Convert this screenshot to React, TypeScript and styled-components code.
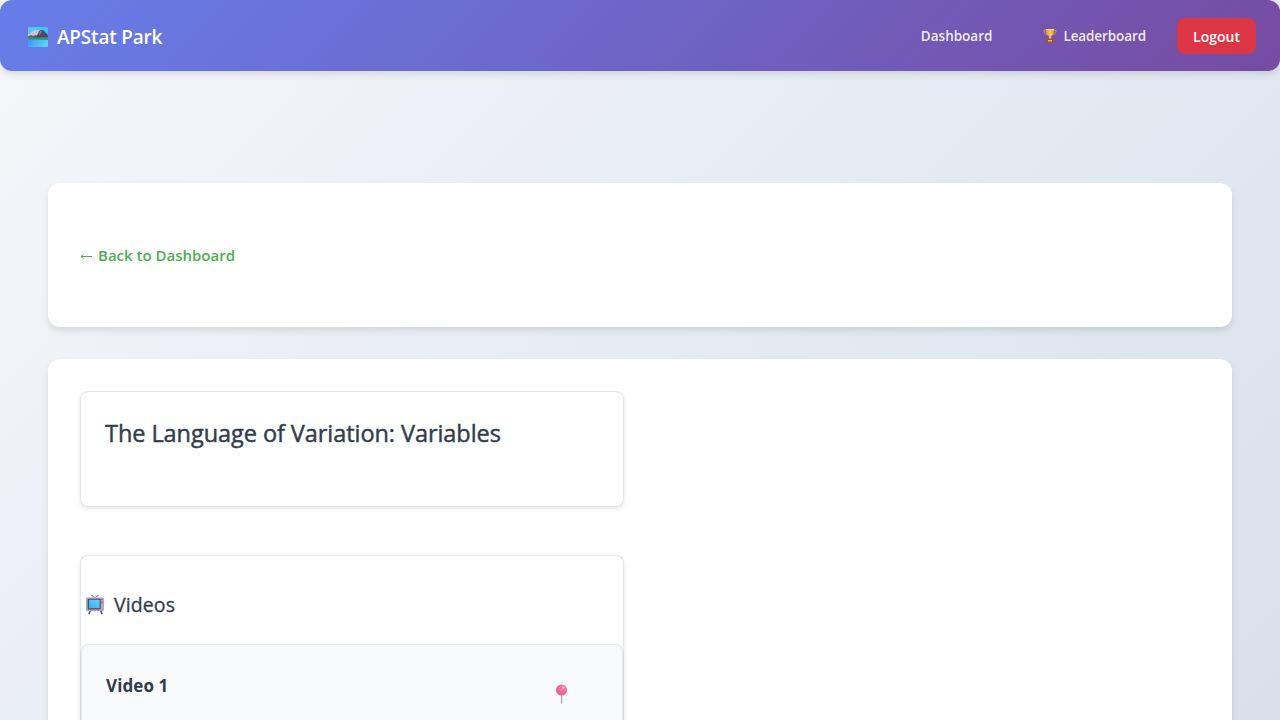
import React from "react";
import styled, { createGlobalStyle } from "styled-components";

const Global = createGlobalStyle`
  * { box-sizing: border-box; }
  body {
    margin: 0;
    font-family: "Open Sans", "Noto Sans", sans-serif;
    color: #323c4d;
  }
`;

const Shell = styled.div`
  display: flex;
  flex-direction: column;
  height: 100vh;
  overflow: hidden;
  background: linear-gradient(135deg, #f5f7fa 0%, #d8e0ec 100%);
`;

const Label = styled.span<{ $track?: number }>`
  letter-spacing: ${(p) => p.$track ?? 0}px;
  white-space: nowrap;
`;

const Navbar = styled.nav`
  display: flex;
  flex: none;
  align-items: center;
  justify-content: space-between;
  height: 71px;
  padding: 0 24px 0 27px;
  border-radius: 12px;
  background: linear-gradient(135deg, #667eea 0%, #764ba2 100%);
  box-shadow: 0 4px 6px rgba(0, 0, 0, 0.1);
`;

const Brand = styled.a`
  display: flex;
  align-items: center;
  gap: 9px;
  padding-top: 2px;
  color: #fff;
  font-size: 19px;
  font-weight: 600;
  line-height: 26px;
`;

const NavLinks = styled.div`
  display: flex;
  align-items: center;
`;

const NavLink = styled.a`
  display: flex;
  align-items: center;
  gap: 6px;
  margin-right: 31px;
  color: rgba(255, 255, 255, 0.9);
  font-size: 13.5px;
  font-weight: 600;
  line-height: 20px;
  &:first-child { margin-right: 51px; }
`;

const LogoutButton = styled.button`
  width: 79px;
  height: 36px;
  margin-top: 1px;
  padding: 2px 0 0;
  border: 0;
  border-radius: 8px;
  background: #dc3545;
  color: #fff;
  font: 600 14px/20px "Open Sans", "Noto Sans", sans-serif;
`;

const Page = styled.main`
  display: flex;
  flex: 1;
  flex-direction: column;
  gap: 32px;
  min-height: 0;
  padding: 112px 48px 0;
`;

const Panel = styled.section`
  flex: none;
  height: 144px;
  padding: 32px;
  border-radius: 12px;
  background: #fff;
  box-shadow: 0 4px 6px rgba(0, 0, 0, 0.1);
`;

const LessonPanel = styled(Panel)`
  display: flex;
  flex: 1;
  flex-direction: column;
  gap: 48px;
  height: auto;
  min-height: 0;
  padding-bottom: 0;
  border-radius: 12px 12px 0 0;
`;

const BackLink = styled.a`
  display: flex;
  align-items: center;
  gap: 6px;
  height: 79px;
  color: #4caf50;
  font-size: 15px;
  font-weight: 600;
`;

const Card = styled.article`
  flex: none;
  width: 544px;
  height: 116px;
  border: 1px solid #e5e7eb;
  border-radius: 8px;
  background: #fff;
  box-shadow: 0 2px 4px rgba(0, 0, 0, 0.1);
`;

const VideosCard = styled(Card)`
  display: flex;
  flex: 1;
  flex-direction: column;
  height: auto;
  min-height: 0;
  border-bottom: 0;
  border-radius: 8px 8px 0 0;
`;

const Title = styled.h1`
  margin: 0;
  padding: 23px 24px;
  font-size: 23.5px;
  font-weight: 400;
  line-height: 36px;
  -webkit-text-stroke: 0.45px currentColor;
`;

const SectionTitle = styled.h2`
  display: flex;
  flex: none;
  align-items: center;
  gap: 9px;
  height: 88px;
  margin: 0;
  padding: 9px 0 0 4px;
  font-size: 19.5px;
  font-weight: 400;
  -webkit-text-stroke: 0.3px currentColor;
`;

const VideoItem = styled.div`
  display: flex;
  flex: 1;
  justify-content: space-between;
  align-items: flex-start;
  min-height: 0;
  padding: 24px 54px 0 24px;
  border: 1px solid #e5e7eb;
  border-bottom: 0;
  border-radius: 8px 8px 0 0;
  background: #f9fafb;
  box-shadow: 0 1px 3px rgba(0, 0, 0, 0.1);
`;

const VideoName = styled.h3`
  margin: 3px 0 0;
  font-size: 17px;
  font-weight: 700;
  line-height: 28px;
`;

const PinSlot = styled.span`
  display: flex;
  padding-top: 15px;
`;

const Mountain = () => (
  <svg width="21" height="20" viewBox="0 0 21 20">
    <defs>
      <linearGradient id="sky" x1="0" y1="0" x2="1" y2="0">
        <stop offset="0" stopColor="#52c8f6" /><stop offset="1" stopColor="#35c5f4" />
      </linearGradient>
      <linearGradient id="lake" x1="0" y1="0" x2="1" y2="0.3">
        <stop offset="0" stopColor="#3a91fa" /><stop offset="1" stopColor="#5bd1fd" />
      </linearGradient>
      <clipPath id="frame"><rect x="1" width="20" height="20" rx="1" /></clipPath>
    </defs>
    <g clipPath="url(#frame)">
      <rect width="21" height="20" fill="url(#sky)" />
      <path d="M0 8 4 5.500 6 4 8 3h4l2 3 0 5H0Z" fill="#c9c4cf" />
      <path d="M0 10l4-2 2 1 3-1v3H0Z" fill="#625579" />
      <path d="M9 9l2-2 1-3 2-1h2l2 2 3 3v3H9Z" fill="#51476e" />
      <path d="M13 4l2-.5-1 3-2 2Z" fill="#857b95" />
      <path d="M0 11l4-1 3 .5 5 0 4-.5 5 0v3H0Z" fill="#31886d" />
      <rect y="11.500" width="21" height="1.500" fill="#35a66f" />
      <rect y="13" width="21" height="7" fill="url(#lake)" />
    </g>
  </svg>
);

const Trophy = () => (
  <svg width="14" height="16" viewBox="0 0 14 16">
    <defs>
      <linearGradient id="gold" x1="0" y1="0" x2="1" y2="0">
        <stop offset="0" stopColor="#ec8a43" /><stop offset=".55" stopColor="#f9ce64" /><stop offset="1" stopColor="#df873f" />
      </linearGradient>
    </defs>
    <path d="M3 2H1.100v2q.4 2.400 3 2.700M11 2h1.900v2q-.4 2.400-3 2.700" fill="none" stroke="#dc8347" strokeWidth="1" />
    <path d="M2.700 1h8.600v3.200q-.6 3-3.200 3.800v3H6V8Q3.300 7.200 2.700 4.200Z" fill="url(#gold)" />
    <path d="M3 1.500h8" stroke="#ffe27a" strokeWidth="1" />
    <path d="M2.500 10.500h9l.5 4.500H2Z" fill="#99504f" />
    <rect x="5" y="12" width="4" height="1.500" fill="#f1bd55" />
  </svg>
);

const Television = () => (
  <svg width="20" height="21" viewBox="0 0 20 21">
    <defs>
      <linearGradient id="screen" x1="0" y1="1" x2="1" y2="0">
        <stop stopColor="#3cabed" /><stop offset="1" stopColor="#5bd5ff" />
      </linearGradient>
    </defs>
    <path d="M6.500 1 10 4l3.500-3" fill="none" stroke="#9a939f" strokeWidth="1.200" />
    <path d="M5.500 16 4 20M15.500 16l1.500 4" stroke="#594b68" strokeWidth="1.500" />
    <rect x="1" y="3.500" width="18" height="13.500" rx="1" fill="#b3a8bd" />
    <rect x="2.700" y="4.800" width="13" height="10.700" rx="1" fill="#554961" />
    <rect x="4" y="5.800" width="10.500" height="8.500" rx=".5" fill="url(#screen)" />
    <rect x="16" y="5" width="1.500" height="1.200" fill="#7d7187" />
    <circle cx="17" cy="8.500" r="1" fill="#dc4c77" />
  </svg>
);

const Pin = () => (
  <svg width="13" height="20" viewBox="0 0 13 20">
    <defs>
      <radialGradient id="ball" cx=".6" cy=".35">
        <stop stopColor="#ff83ad" /><stop offset="1" stopColor="#ec6295" />
      </radialGradient>
    </defs>
    <path d="M6.600 10v9.500" stroke="#aaa2b2" strokeWidth="1.300" />
    <circle cx="6.500" cy="6" r="5.500" fill="url(#ball)" />
    <ellipse cx="8.300" cy="3.500" rx="1.500" ry="1" fill="#ffc2d8" />
  </svg>
);

const Arrow = () => (
  <svg width="12" height="10" viewBox="0 0 12 10" fill="none" stroke="currentColor" strokeWidth="1">
    <path d="M1 6.500h11M3.500 4.500 1 6.500l2.500 2" />
  </svg>
);

export default function App() {
  return (
    <>
      <Global />
      <Shell>
        <Navbar>
          <Brand><Mountain /><Label $track={-0.2}>APStat Park</Label></Brand>
          <NavLinks>
            <NavLink><Label>Dashboard</Label></NavLink>
            <NavLink><Trophy /><Label $track={-0.1}>Leaderboard</Label></NavLink>
            <LogoutButton><Label>Logout</Label></LogoutButton>
          </NavLinks>
        </Navbar>
        <Page>
          <Panel>
            <BackLink><Arrow /><Label>Back to Dashboard</Label></BackLink>
          </Panel>
          <LessonPanel>
            <Card><Title><Label $track={-0.06}>The Language of Variation: Variables</Label></Title></Card>
            <VideosCard>
              <SectionTitle><Television /><Label $track={0.1}>Videos</Label></SectionTitle>
              <VideoItem>
                <VideoName><Label $track={0.1}>Video 1</Label></VideoName>
                <PinSlot><Pin /></PinSlot>
              </VideoItem>
            </VideosCard>
          </LessonPanel>
        </Page>
      </Shell>
    </>
  );
}
